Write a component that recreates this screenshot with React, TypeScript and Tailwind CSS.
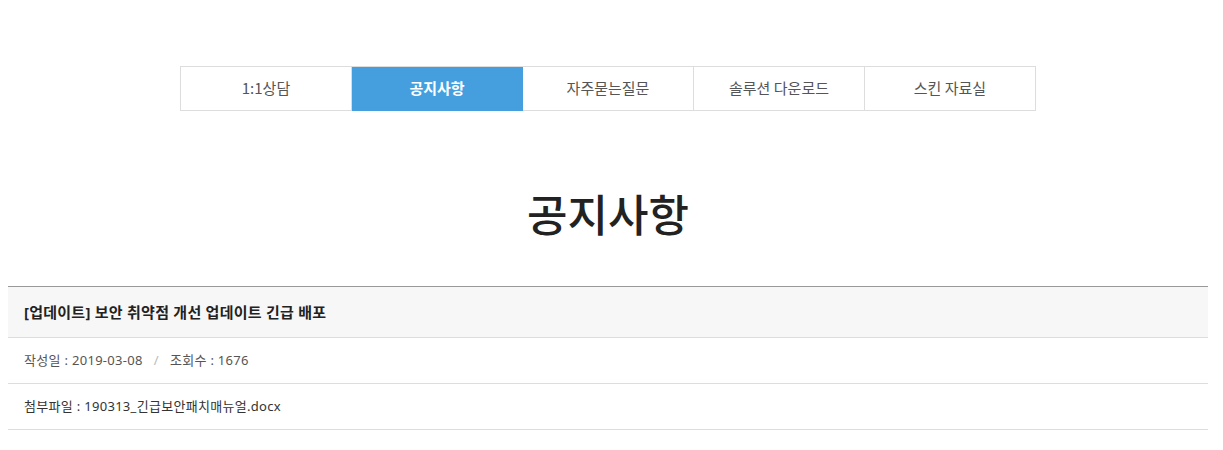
const tabs = ['1:1상담', '공지사항', '자주묻는질문', '솔루션 다운로드', '스킨 자료실'];

export default function App() {
  return (
    <div
      className="min-h-[450px] bg-white pt-[66px]"
      style={{ fontFamily: '"Noto Sans CJK KR", "Noto Sans", sans-serif' }}
    >
      <div className="ml-[8px] w-[1200px]">
        {/* Tabs */}
        <ul className="mx-auto flex w-[856px] border-t border-l border-[#dddddd]">
          {tabs.map((t) => {
            const active = t === '공지사항';
            return (
              <li
                key={t}
                className={
                  active
                    ? 'flex h-[44px] flex-1 items-center justify-center border-r border-b border-[#459fdf] bg-[#459fdf] text-[15px] font-bold text-white'
                    : 'flex h-[44px] flex-1 items-center justify-center border-r border-b border-[#dddddd] text-[15px] text-[#555555]'
                }
              >
                {t}
              </li>
            );
          })}
        </ul>

        {/* Title */}
        <h2 className="mt-[73px] text-center text-[44px] leading-[58px] font-medium text-[#222222]">
          공지사항
        </h2>

        {/* Notice view */}
        <div
          className="mt-[44px] border-t border-[#999999]"
          style={{ fontFamily: '"Noto Sans", "Noto Sans CJK KR", sans-serif' }}
        >
          <div className="flex h-[51px] items-center border-b border-[#dddddd] bg-[#f7f7f7] px-4 text-[15px] font-bold tracking-[0.25px] text-[#222222]">
            [업데이트] 보안 취약점 개선 업데이트 긴급 배포
          </div>
          <div className="flex h-[46px] items-center border-b border-[#dddddd] px-4 text-[13px] tracking-[0.3px] text-[#555555]">
            <span>작성일 : 2019-03-08</span>
            <span className="mx-[11px] text-[#bbbbbb]">/</span>
            <span>조회수 : 1676</span>
          </div>
          <div className="flex h-[46px] items-center border-b border-[#dddddd] px-4 text-[13px] tracking-[0.3px] text-[#333333]">
            첨부파일 : 190313_긴급보안패치매뉴얼.docx
          </div>
        </div>
      </div>
    </div>
  );
}
